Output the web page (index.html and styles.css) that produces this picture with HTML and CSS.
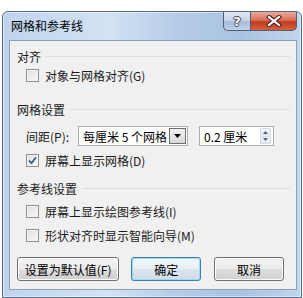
FILE: index.html
```html
<!DOCTYPE html>
<html lang="zh-CN">
<head>
    <meta charset="UTF-8">
    <title>网格和参考线</title>
    <link rel="stylesheet" href="styles.css">
</head>
<body>
    <div class="window">
        <div class="titlebar">
            <span class="title">网格和参考线</span>
            <div class="caption">
                <span class="cap help">?</span>
                <span class="cap close">
                    <svg width="16" height="12" viewBox="0 0 16 12">
                        <path d="M3 2 L13 10 M13 2 L3 10" stroke="#4a2020" stroke-width="4.2" stroke-linecap="square"/>
                        <path d="M3 2 L13 10 M13 2 L3 10" stroke="#fff" stroke-width="2.2" stroke-linecap="square"/>
                    </svg>
                </span>
            </div>
        </div>

        <div class="client">
            <div class="group-title first"><span>对齐</span><i class="rule"></i></div>
            <div class="check-row cb1"><span class="box"></span>对象与网格对齐(<u>G</u>)</div>

            <div class="group-title second"><span>网格设置</span><i class="rule"></i></div>
            <div class="spacing-row">
                <span class="lbl">间距(<u>P</u>):</span>
                <div class="combo">
                    <span class="combo-text">每厘米 5 个网格</span>
                    <span class="drop">
                        <svg width="7" height="4" viewBox="0 0 7 4"><path d="M0 0 H7 L3.5 4 Z" fill="#000"/></svg>
                    </span>
                </div>
                <div class="spin">
                    <span class="spin-text">0.2 厘米</span>
                    <span class="spin-btns">
                        <i class="arrow up"><svg width="5" height="3" viewBox="0 0 5 3"><path d="M0 3 H5 L2.5 0 Z" fill="#4d6185"/></svg></i>
                        <i class="arrow down"><svg width="5" height="3" viewBox="0 0 5 3"><path d="M0 0 H5 L2.5 3 Z" fill="#4d6185"/></svg></i>
                    </span>
                </div>
            </div>
            <div class="check-row cb2">
                <span class="box">
                    <svg width="9" height="9" viewBox="0 0 9 9"><path d="M1 4.5 L3.5 7.2 L8 1.2" stroke="#3f5489" stroke-width="1.8" fill="none"/></svg>
                </span>屏幕上显示网格(<u>D</u>)
            </div>

            <div class="group-title third"><span>参考线设置</span><i class="rule"></i></div>
            <div class="check-row cb3"><span class="box"></span>屏幕上显示绘图参考线(<u>I</u>)</div>
            <div class="check-row cb4"><span class="box"></span>形状对齐时显示智能向导(<u>M</u>)</div>

            <div class="buttons">
                <a href="#" class="btn wide">设置为默认值(<u>F</u>)</a>
                <a href="#" class="btn default">确定</a>
                <a href="#" class="btn">取消</a>
            </div>
        </div>
    </div>
</body>
</html>
```

FILE: styles.css
```css
* {
    padding: 0;
    margin: 0;
    box-sizing: border-box;
    text-decoration: none;
}

body {
    width: 303px;
    height: 298px;
    overflow: hidden;
    background: #fff;
    font-family: "Noto Sans CJK SC", "Noto Sans", sans-serif;
    font-size: 12px;
    color: #1a1a1a;
}

.window {
    width: 300px;
    height: 287px;
    margin: 11px 0 0 2px;
    padding: 0 4px 6px 6px;
    border: 1px solid #58687e;
    border-radius: 6px 6px 0 0;
    background: linear-gradient(to right, #bfd4ec 0%, #d3e2f3 35%, #b3cbe7 60%, #a9c3e2 80%, #c2d6ed 100%);
    box-shadow: inset 0 0 0 1px rgba(255, 255, 255, 0.5);
}

.titlebar {
    height: 28px;
    display: flex;
    align-items: flex-start;
}
.title {
    line-height: 28px;
    padding-left: 2px;
    color: #000;
}
.caption {
    margin-left: auto;
    display: flex;
}
.cap {
    height: 19px;
    display: flex;
    align-items: center;
    justify-content: center;
    border: 1px solid #4f5f75;
    border-top: none;
}
.help {
    width: 27px;
    border-right: none;
    border-bottom-left-radius: 5px;
    background: linear-gradient(#dfe8f3 0%, #c6d4e6 45%, #a8bcd6 55%, #c2d3e8 100%);
    color: #fff;
    font-family: "DejaVu Sans", sans-serif;
    font-weight: bold;
    font-size: 13px;
    text-shadow: 1px 0 #3d4b5e, -1px 0 #3d4b5e, 0 1px #3d4b5e, 0 -1px #3d4b5e;
}
.close {
    width: 47px;
    border-bottom-right-radius: 5px;
    background: linear-gradient(#e9a99a 0%, #d8705b 45%, #c2391f 55%, #d6603c 100%);
}

.client {
    height: 250px;
    border: 1px solid #8c9fb8;
    background: #f0f0f0;
}

.group-title {
    height: 16px;
    display: flex;
    align-items: center;
    padding: 0 6px 0 7px;
    color: #1a1a1a;
}
.group-title .rule {
    flex: 1;
    height: 1px;
    margin-left: 5px;
    background: #d5dfe5;
}
.group-title.first { margin-top: 7px; }
.group-title.second { margin-top: 18px; }
.group-title.third { margin-top: 12px; }

.check-row {
    height: 16px;
    display: flex;
    align-items: center;
    padding-left: 16px;
}
.check-row .box {
    width: 13px;
    height: 13px;
    margin-right: 6px;
    border: 1px solid #8e8f8f;
    background: linear-gradient(135deg, #dcdcdc, #fbfbfb);
    box-shadow: inset 0 0 0 1px #f4f4f4;
    display: flex;
    align-items: center;
    justify-content: center;
}
.cb1 { margin-top: 3px; }
.cb2 { margin-top: 6px; }
.cb3 { margin-top: 7px; }
.cb4 { margin-top: 8px; }

.spacing-row {
    height: 20px;
    margin-top: 9px;
    padding-left: 16px;
    display: flex;
    align-items: center;
}
.lbl {
    width: 52px;
}
.combo {
    width: 110px;
    height: 20px;
    border: 1px solid #abadb3;
    background: #fff;
    display: flex;
    align-items: center;
    padding: 1px;
}
.combo-text {
    flex: 1;
    padding-left: 3px;
    color: #000;
}
.drop {
    width: 17px;
    height: 16px;
    border: 1px solid #6e6e6e;
    background: linear-gradient(#f0f0f0, #dadada);
    display: flex;
    align-items: center;
    justify-content: center;
}
.spin {
    width: 75px;
    height: 20px;
    margin-left: 11px;
    border: 1px solid #abadb3;
    background: #fff;
    display: flex;
    align-items: center;
    padding: 1px 2px 1px 1px;
}
.spin-text {
    flex: 1;
    padding-left: 3px;
    color: #000;
}
.spin-btns {
    width: 11px;
    height: 16px;
    display: flex;
    flex-direction: column;
}
.arrow {
    flex: 1;
    display: flex;
    align-items: center;
    justify-content: center;
    background: linear-gradient(#f3f6fb, #dfe7f1);
    border: 1px solid #d4dce8;
}
.arrow.down {
    border-top: none;
}

.buttons {
    margin-top: 14px;
    padding-left: 7px;
    display: flex;
}
.btn {
    width: 71px;
    height: 24px;
    margin-right: 12px;
    display: flex;
    align-items: center;
    justify-content: center;
    border: 1px solid #707070;
    border-radius: 3px;
    background: linear-gradient(#f3f3f3 0%, #ebebeb 48%, #dddddd 52%, #d0d0d0 100%);
    box-shadow: inset 0 0 0 1px #fcfcfc;
    color: #000;
}
.btn.wide {
    width: 104px;
}
.btn.default {
    margin-right: 13px;
    border-color: #3c7fb1;
    background: linear-gradient(#f2f7fb 0%, #e8eff6 48%, #dbe5ee 52%, #cfdbe6 100%);
    box-shadow: inset 0 0 0 1px #9fd8f3;
}
```
